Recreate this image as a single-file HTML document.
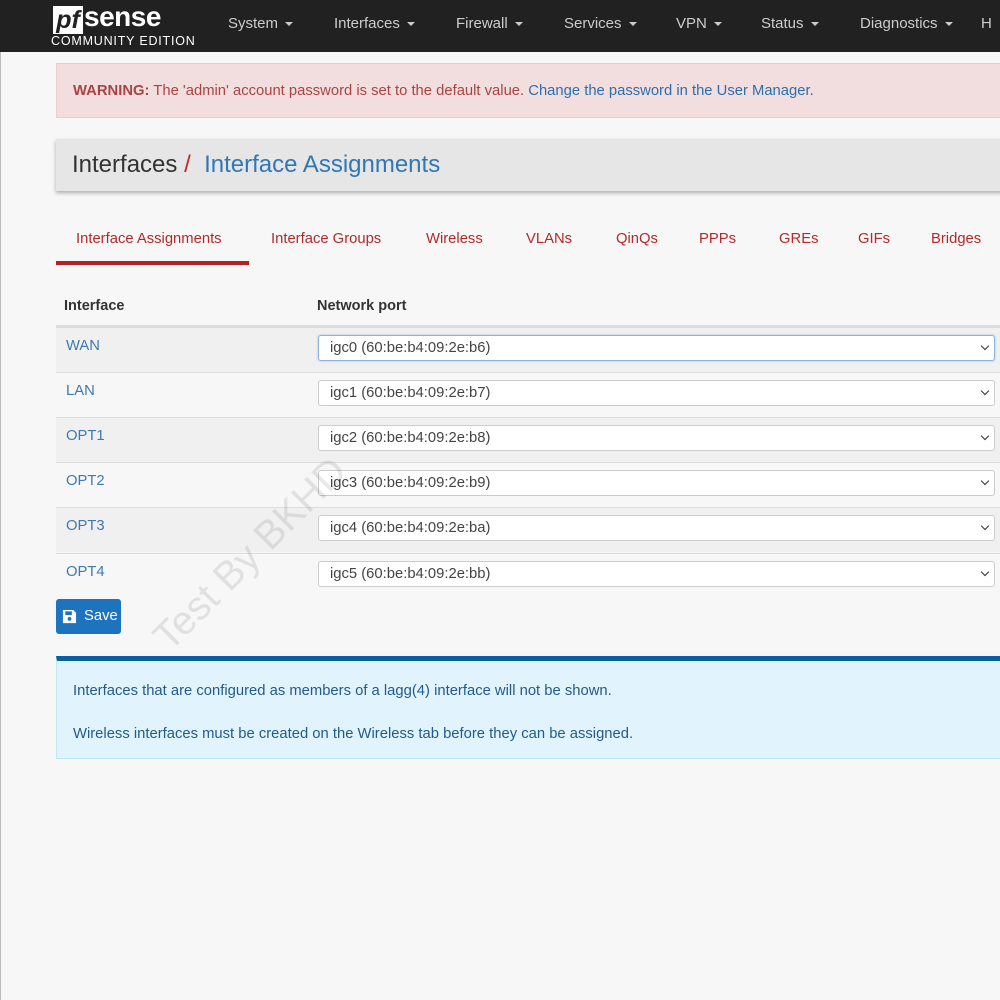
<!DOCTYPE html>
<html><head><style>
body{margin:0;width:1000px;height:1000px;overflow:hidden;background:#f7f7f7;font-family:"Liberation Sans",sans-serif;position:relative}
.edge{position:absolute;left:0;top:0;width:1px;height:1000px;background:#bbb}
.nav{position:absolute;left:0;top:0;width:1000px;height:52px;background:#212121}
.logo{position:absolute;left:51px;top:4px;color:#fff}
.logo .pf{position:absolute;left:2px;top:2px;width:30px;height:28px;background:#fff;color:#212121;font:italic bold 25px "Liberation Sans";line-height:28px;text-align:center}
.logo .sense{position:absolute;left:33px;top:-3px;font:bold 28px "Liberation Sans";letter-spacing:-0.5px}
.logo .ce{position:absolute;left:0;top:30px;font-size:12.5px;letter-spacing:0.8px;white-space:nowrap}
.menu{position:absolute;top:15px;color:#ccc;font-size:15px;white-space:nowrap}
.menu span::after{content:"";display:inline-block;margin-left:7px;border-left:4px solid transparent;border-right:4px solid transparent;border-top:4px solid #ccc;vertical-align:middle}
.warn{position:absolute;left:56px;top:63px;width:960px;height:55px;background:#f2dede;border:1px solid #ebccd1;box-sizing:border-box;color:#a94442;font-size:14.8px;padding:19px 16px;white-space:nowrap}
.warn a{color:#2a6fb0}
.crumb{position:absolute;left:56px;top:139px;width:960px;height:52px;background:#e6e6e6;box-shadow:0 2px 4px rgba(0,0,0,.3);font-size:24px;color:#333;padding:12px 16px;box-sizing:border-box}
.crumb .s{color:#c12a2a}.crumb .b{color:#3077b8}
.tab{position:absolute;top:231px;color:#b22a2a;font-size:14.8px}
.tabline{position:absolute;left:56px;top:261px;width:193px;height:4px;background:#b22222}
.th{position:absolute;top:298px;font-weight:bold;font-size:14.5px;color:#333}
.hline{position:absolute;left:56px;width:944px;height:1px;background:#ddd}
.row{position:absolute;left:56px;width:944px;height:45px;border-top:1px solid #ddd;box-sizing:border-box}
.row.o{background:#f0f0f0}
.row .n{position:absolute;left:10px;top:10px;color:#3c7ab5;font-size:14.8px}
.sel{position:absolute;left:262px;top:7px;width:677px;height:26px;background:#fff;border:1px solid #ccc;border-radius:3px;box-sizing:border-box;font-size:14.8px;color:#444;padding:4px 11px}
.sel::after{content:"";position:absolute;right:6px;top:7px;width:5px;height:5px;border-right:1.6px solid #333;border-bottom:1.6px solid #333;transform:rotate(45deg)}
.save{position:absolute;left:56px;top:599px;width:65px;height:35px;background:#1e73be;border-radius:3px;color:#fff;font-size:14.8px}
.info{position:absolute;left:56px;top:656px;width:960px;height:103px;background:#e1f4fd;border:1px solid #bce8f1;border-top:5px solid #0a5ea2;box-sizing:border-box;color:#245a8a;font-size:14.8px;white-space:nowrap}
.wm{position:absolute;transform:rotate(-45deg);transform-origin:left top;font-size:40px;color:rgba(0,0,0,.09);white-space:nowrap}
</style></head><body>
<div class="edge"></div>
<div class="nav">
<div class="logo"><div class="pf">pf</div><div class="sense">sense</div><div class="ce">COMMUNITY EDITION</div></div>
<div class="menu" style="left:228px"><span>System</span></div>
<div class="menu" style="left:334px"><span>Interfaces</span></div>
<div class="menu" style="left:456px"><span>Firewall</span></div>
<div class="menu" style="left:564px"><span>Services</span></div>
<div class="menu" style="left:676px"><span>VPN</span></div>
<div class="menu" style="left:761px"><span>Status</span></div>
<div class="menu" style="left:860px"><span>Diagnostics</span></div>
<div class="menu" style="left:981px">H</div>
</div>
<div class="warn"><b>WARNING:</b> The 'admin' account password is set to the default value. <a>Change the password in the User Manager.</a></div>
<div class="crumb">Interfaces <span class="s">/</span>&nbsp; <span class="b">Interface Assignments</span></div>
<div class="tab" style="left:76px">Interface Assignments</div>
<div class="tab" style="left:271px">Interface Groups</div>
<div class="tab" style="left:426px">Wireless</div>
<div class="tab" style="left:526px">VLANs</div>
<div class="tab" style="left:616px">QinQs</div>
<div class="tab" style="left:699px">PPPs</div>
<div class="tab" style="left:779px">GREs</div>
<div class="tab" style="left:858px">GIFs</div>
<div class="tab" style="left:931px">Bridges</div>
<div class="tabline"></div>
<div class="th" style="left:64px">Interface</div>
<div class="th" style="left:317px">Network port</div>
<div class="hline" style="top:325px;height:2px"></div>
<div class="row o" style="top:327px"><div class="n">WAN</div><div class="sel" style="border-color:#8ab4e0;box-shadow:0 0 2px #9cc3ea">igc0 (60:be:b4:09:2e:b6)</div></div>
<div class="row" style="top:372px"><div class="n">LAN</div><div class="sel">igc1 (60:be:b4:09:2e:b7)</div></div>
<div class="row o" style="top:417px"><div class="n">OPT1</div><div class="sel">igc2 (60:be:b4:09:2e:b8)</div></div>
<div class="row" style="top:462px"><div class="n">OPT2</div><div class="sel">igc3 (60:be:b4:09:2e:b9)</div></div>
<div class="row o" style="top:507px"><div class="n">OPT3</div><div class="sel">igc4 (60:be:b4:09:2e:ba)</div></div>
<div class="row" style="top:553px"><div class="n">OPT4</div><div class="sel">igc5 (60:be:b4:09:2e:bb)</div></div>
<div class="save"><svg style="position:absolute;left:6px;top:10px" width="15" height="15" viewBox="0 0 16 16"><path d="M1 1h11l3 3v11H1z" fill="#fff"/><rect x="3.5" y="2.5" width="7" height="4" fill="#1e73be"/><circle cx="8" cy="10.5" r="2" fill="#1e73be"/></svg><span style="position:absolute;left:28px;top:9px">Save</span></div>
<div class="info"><div style="position:absolute;left:16px;top:22px">Interfaces that are configured as members of a lagg(4) interface will not be shown.</div><div style="position:absolute;left:16px;top:65px">Wireless interfaces must be created on the Wireless tab before they can be assigned.</div></div>
<div class="wm" style="left:145px;top:628px">Test By BKHD</div>
</body></html>
